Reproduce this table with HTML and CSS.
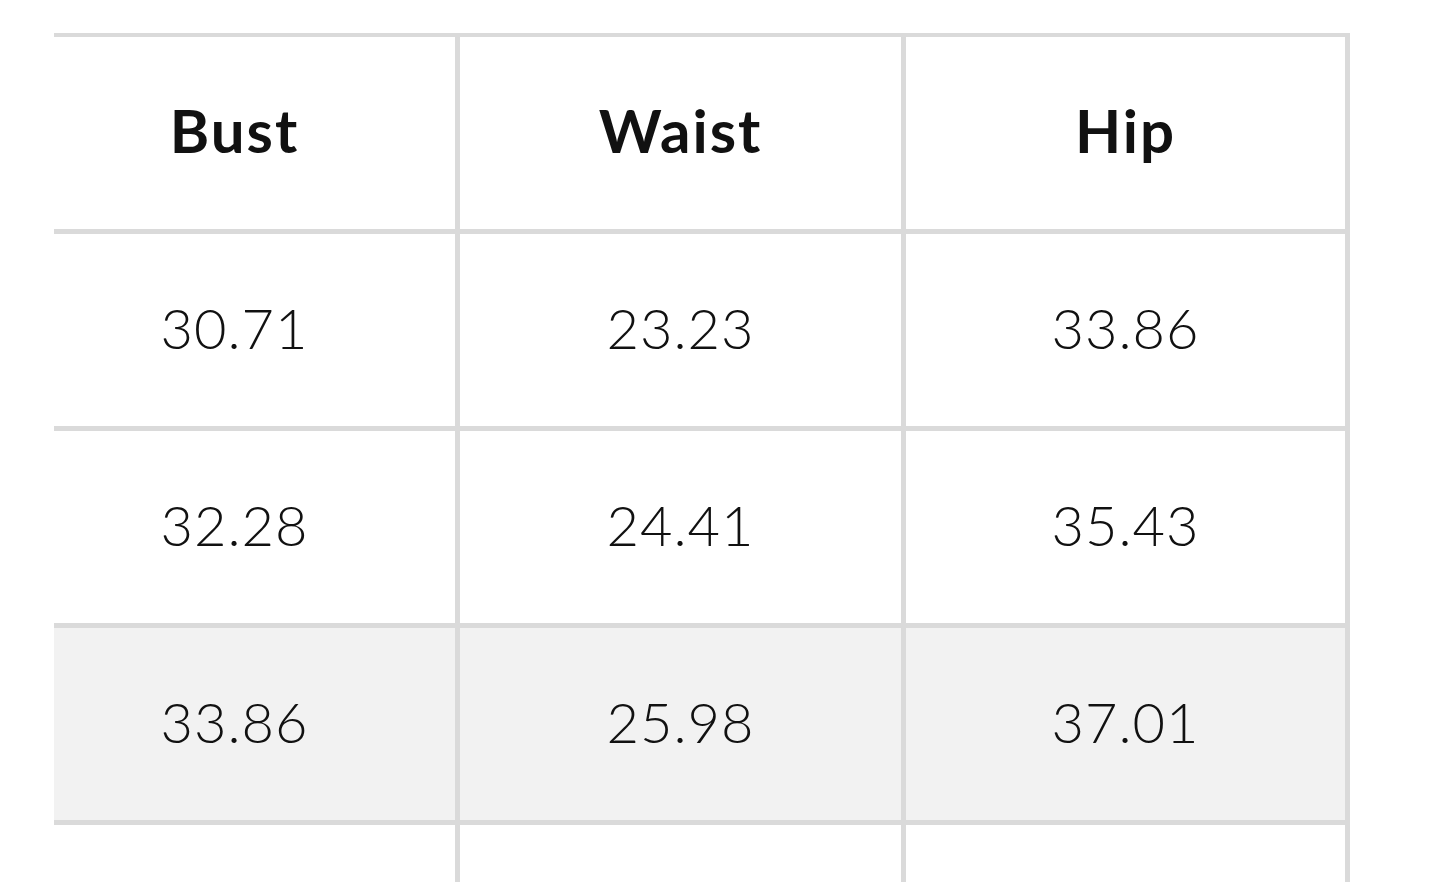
FILE: index.html
```html
<!DOCTYPE html>
<html lang="en">
<head>
<meta charset="utf-8">
<title>Size chart</title>
<link rel="stylesheet" href="styles.css">
</head>
<body>
<div class="viewport">
  <table class="size-table">
    <colgroup><col class="c"><col class="c"><col class="c3"></colgroup>
    <thead>
      <tr><th>Bust</th><th>Waist</th><th>Hip</th></tr>
    </thead>
    <tbody>
      <tr><td>30.71</td><td>23.23</td><td>33.86</td></tr>
      <tr><td>32.28</td><td>24.41</td><td>35.43</td></tr>
      <tr class="hl"><td>33.86</td><td>25.98</td><td>37.01</td></tr>
      <tr><td></td><td></td><td></td></tr>
    </tbody>
  </table>
</div>
</body>
</html>
```
FILE: styles.css
```css
html, body {
  margin: 0;
  padding: 0;
  background: #fff;
  height: 882px;
  overflow: hidden;
}
body {
  font-family: Lato, "Open Sans", sans-serif;
  color: #111;
}
.viewport {
  margin-left: 54px;
  padding-top: 33px;
  overflow: hidden;
  height: 849px;
}
.size-table {
  margin-left: -45px;
  border-collapse: separate;
  border-spacing: 0;
  table-layout: fixed;
  width: 1341px;
  border-top: 4px solid #dadada;
  border-left: 5px solid #dadada;
}
.size-table .c { width: 446px; }
.size-table .c3 { width: 444px; }
.size-table th,
.size-table td {
  height: 197px;
  padding: 0 0 6px 0;
  border-right: 5px solid #dadada;
  border-bottom: 5px solid #dadada;
  text-align: center;
  vertical-align: middle;
  box-sizing: border-box;
}
.size-table th {
  font-size: 60px;
  font-weight: 700;
  letter-spacing: 2px;
}
.size-table td {
  font-size: 56px;
  font-weight: 300;
  letter-spacing: 1px;
}
.size-table tr.hl td {
  background: #f2f2f2;
}
```
